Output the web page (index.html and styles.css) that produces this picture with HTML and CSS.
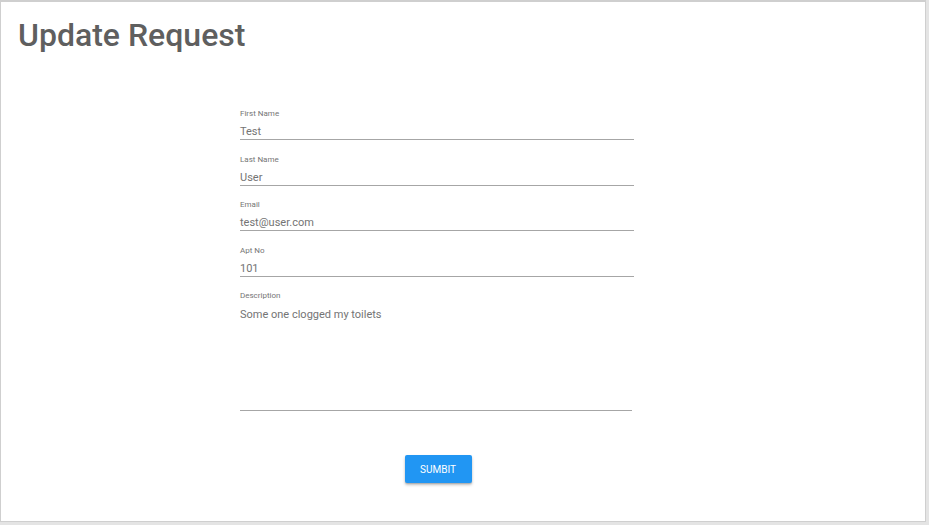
FILE: index.html
```html
<!DOCTYPE html>
<html>
<head>
<meta charset="utf-8">
<link rel="stylesheet" href="styles.css">
</head>
<body>
<div class="card">
  <h1 class="title">Update Request</h1>
  <form class="form">
    <div class="field">
      <label class="label">First Name</label>
      <div class="input">Test</div>
    </div>
    <div class="field">
      <label class="label">Last Name</label>
      <div class="input">User</div>
    </div>
    <div class="field">
      <label class="label">Email</label>
      <div class="input">test@user.com</div>
    </div>
    <div class="field">
      <label class="label">Apt No</label>
      <div class="input">101</div>
    </div>
    <div class="field field-area">
      <label class="label">Description</label>
      <div class="input textarea">Some one clogged my toilets</div>
    </div>
    <div class="actions">
      <button type="button" class="btn">SUMBIT</button>
    </div>
  </form>
</div>
</body>
</html>
```

FILE: styles.css
```css
html, body {
  margin: 0;
  padding: 0;
}
body {
  background: #e4e4e4;
  font-family: Roboto, "Liberation Sans", sans-serif;
  width: 929px;
  height: 525px;
  overflow: hidden;
}
.card {
  box-sizing: border-box;
  width: 926px;
  height: 522px;
  background: #fff;
  border: 1px solid #cfcfcf;
  border-top-width: 2px;
  padding: 0 17px;
}
.title {
  margin: 14px 0 0 0;
  font-size: 32px;
  font-weight: 500;
  line-height: 38px;
  color: #5f5f5f;
}
.form {
  width: 394px;
  margin: 55px 0 0 222px;
}
.field {
  margin-bottom: 14.5px;
}
.label {
  display: block;
  font-size: 8px;
  line-height: 10px;
  color: #757575;
  margin-bottom: 5px;
}
.input {
  font-size: 11px;
  line-height: 15px;
  color: #747474;
  border-bottom: 1px solid #a6a6a6;
  padding: 0;
}
.textarea {
  width: 392px;
  box-sizing: border-box;
  padding-top: 1px;
  height: 105px;
}
.actions {
  display: flex;
  justify-content: center;
  padding-top: 29.5px;
  padding-left: 2px;
}
.btn {
  width: 67px;
  height: 28px;
  border: none;
  border-radius: 2px;
  background: #2196f3;
  color: #fff;
  font-family: Roboto, "Liberation Sans", sans-serif;
  font-size: 10px;
  font-weight: 400;
  padding: 0;
  box-shadow: 0 2px 3px rgba(0,0,0,0.25), 0 1px 1px rgba(0,0,0,0.12);
}
```
